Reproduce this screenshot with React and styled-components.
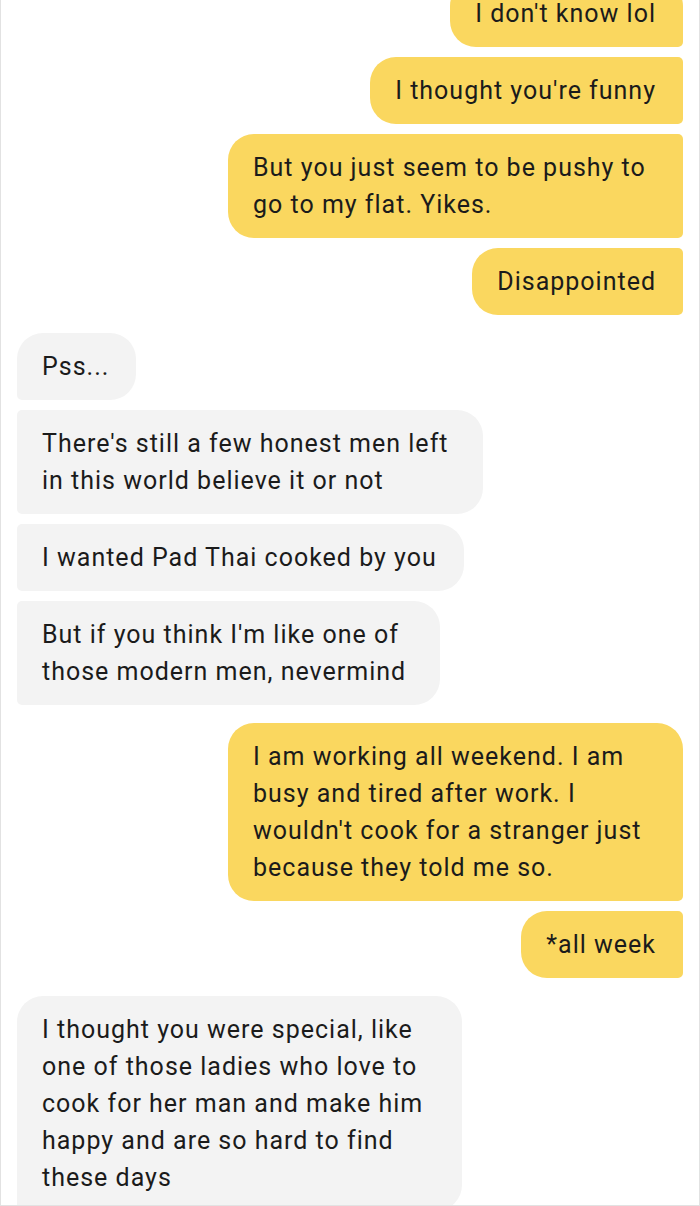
import React from 'react'
import styled, { createGlobalStyle, css } from 'styled-components'

const GlobalStyle = createGlobalStyle`
  html, body {
    margin: 0;
    padding: 0;
    background: #ffffff;
  }
  body {
    font-family: Roboto, "Liberation Sans", sans-serif;
  }
`

const Screen = styled.div`
  width: 700px;
  height: 1206px;
  box-sizing: border-box;
  border: 1px solid #e2e2e2;
  border-top: none;
  overflow: hidden;
  background: #ffffff;
`

const Thread = styled.div`
  display: flex;
  flex-direction: column;
  margin-top: -20px;
  padding: 0 16px 0 16px;
`

const Group = styled.div`
  display: flex;
  flex-direction: column;
  align-items: ${p => (p.$mine ? 'flex-end' : 'flex-start')};
  gap: 10px;
  & + & {
    margin-top: 18px;
  }
`

const Bubble = styled.div`
  box-sizing: border-box;
  padding: 15px 27px 15px 25px;
  font-size: 25px;
  line-height: 37px;
  letter-spacing: 1px;
  color: #1b1b1b;
  white-space: nowrap;
  min-width: ${p => (p.$w ? `${p.$w}px` : 'auto')};
  ${p =>
    p.$mine
      ? css`
          background: #fad75f;
          border-radius: 26px ${p.$first ? '26px' : '5px'} 5px 26px;
        `
      : css`
          background: #f3f3f3;
          border-radius: ${p.$first ? '26px' : '5px'} 26px 26px 5px;
        `}
`

const Line = styled.span`
  display: block;
`

const groups = [
  {
    mine: true,
    msgs: [
      { lines: ["I don't know lol"] },
      { lines: ["I thought you're funny"] },
      { lines: ['But you just seem to be pushy to', 'go to my flat. Yikes.'], w: 455 },
      { lines: ['Disappointed'] }
    ]
  },
  {
    mine: false,
    msgs: [
      { lines: ['Pss...'] },
      { lines: ["There's still a few honest men left", 'in this world believe it or not'], w: 466 },
      { lines: ['I wanted Pad Thai cooked by you'] },
      { lines: ["But if you think I'm like one of", 'those modern men, nevermind'], w: 423 }
    ]
  },
  {
    mine: true,
    msgs: [
      {
        lines: [
          'I am working all weekend. I am',
          'busy and tired after work. I',
          "wouldn't cook for a stranger just",
          'because they told me so.'
        ],
        w: 455
      },
      { lines: ['*all week'] }
    ]
  },
  {
    mine: false,
    msgs: [
      {
        lines: [
          'I thought you were special, like',
          'one of those ladies who love to',
          'cook for her man and make him',
          'happy and are so hard to find',
          'these days'
        ],
        w: 445
      }
    ]
  }
]

const App = () => {
  return (
    <>
      <GlobalStyle />
      <Screen>
        <Thread>
          {groups.map((group, gi) => (
            <Group key={gi} $mine={group.mine}>
              {group.msgs.map((msg, mi) => (
                <Bubble key={mi} $mine={group.mine} $first={mi === 0} $w={msg.w}>
                  {msg.lines.map((line, li) => (
                    <Line key={li}>{line}</Line>
                  ))}
                </Bubble>
              ))}
            </Group>
          ))}
        </Thread>
      </Screen>
    </>
  )
}

export default App
